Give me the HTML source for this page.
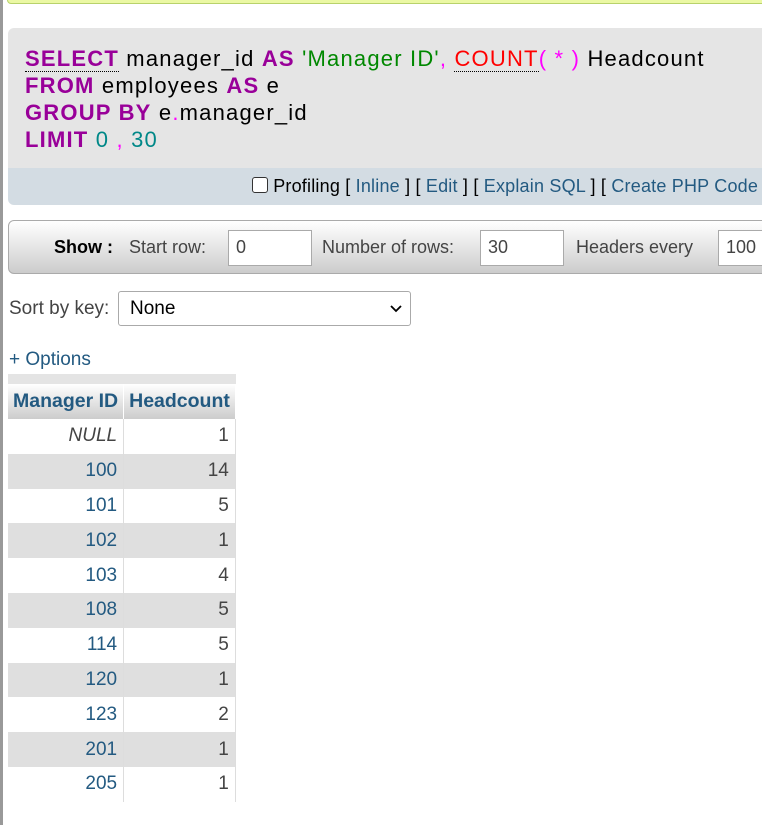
<!DOCTYPE html><html><head><style>
body{margin:0;width:762px;height:825px;overflow:hidden;background:#fff;font-family:"Liberation Sans",sans-serif;position:relative}
.lb{position:absolute;left:0;top:0;width:3px;height:825px;background:#999}
.top{position:absolute;left:7px;top:-8px;width:800px;height:10px;border:1px solid #b8d26b;border-radius:4px;background:#ebf8a4}
.sql{position:absolute;left:8px;top:28px;width:800px;height:140px;background:#e5e5e5;border-radius:6px 0 0 0}
.code{position:absolute;left:17px;top:17px;font-size:22px;letter-spacing:1.2px;line-height:27px;color:#000;white-space:nowrap}
.k{color:#909;font-weight:bold}.s{color:#080}.f{color:#f00}.p{color:#f0f}.n{color:#088}
.u{border-bottom:1px dotted #000}
.bar{position:absolute;left:8px;top:168px;width:800px;height:37px;background:#d3dce3;border-radius:0 0 0 6px;font-size:18px;color:#000;letter-spacing:0.2px}
.bar a{color:#235a81}
.show{position:absolute;left:8px;top:220px;width:800px;height:54px;border-radius:6px 0 0 6px;background:linear-gradient(#fff,#ccc);border:1px solid #aaa;box-sizing:border-box;font-size:18px;color:#444}
.in{position:absolute;top:9px;height:36px;width:84px;border:1px solid #aaa;background:#fff;box-sizing:border-box;padding:6px 7px;color:#444;font-size:18px}
.t{position:absolute;top:16px}
table{position:absolute;left:8px;top:374px;border-collapse:collapse;font-size:19px}
th{background:linear-gradient(#fff,#ccc);color:#235a81;height:35px;padding:0 5px;border-right:1px solid #fff;font-size:19.5px}
td{text-align:right;height:34.8px;padding:0 6px;border-right:1px solid #ddd;color:#235a81;box-sizing:border-box}
td:last-child{color:#444}
tr.g td{background:#dfdfdf}
</style></head><body>
<div class="lb"></div><div class="top"></div>
<div class="sql"><div class="code"><span class="k u">SELECT</span> manager_id <span class="k">AS</span> <span class="s">'Manager ID'</span><span class="p">,</span> <span class="f u">COUNT</span><span class="p">( * )</span> Headcount<br><span class="k">FROM</span> employees <span class="k">AS</span> e<br><span class="k">GROUP BY</span> e<span class="p">.</span>manager_id<br><span class="k">LIMIT</span> <span class="n">0</span> <span class="p">,</span> <span class="n">30</span></div></div>
<div class="bar"><div style="position:absolute;left:244px;top:8px;white-space:nowrap"><span style="display:inline-block;width:14px;height:14px;border:1px solid #333;border-radius:3px;background:#fff;vertical-align:-1px"></span> Profiling [ <a>Inline</a> ] [ <a>Edit</a> ] [ <a>Explain SQL</a> ] [ <a>Create PHP Code</a> ]</div></div>
<div class="show"><span class="t" style="left:45px;color:#000;font-weight:bold">Show :</span><span class="t" style="left:120px">Start row:</span><div class="in" style="left:219px">0</div><span class="t" style="left:313px">Number of rows:</span><div class="in" style="left:471px">30</div><span class="t" style="left:567px">Headers every</span><div class="in" style="left:709px">100</div></div>
<div style="position:absolute;left:9px;top:298px;font-size:19px;color:#444">Sort by key:</div>
<div style="position:absolute;left:118px;top:291px;width:293px;height:35px;border:1px solid #aaa;border-radius:3px;box-sizing:border-box;font-size:19px;padding:6px 11px;color:#000">None<svg style="position:absolute;right:8px;top:13px" width="12" height="8"><path d="M1 1l5 5 5-5" stroke="#000" stroke-width="1.8" fill="none"/></svg></div>
<div style="position:absolute;left:9px;top:349px;font-size:19px;color:#235a81">+ Options</div>
<table><tr><th style="border-top:10px solid #e4e4e4">Manager ID</th><th style="border-top:10px solid #e4e4e4">Headcount</th></tr>
<tr><td style="font-style:italic;color:#444">NULL</td><td>1</td></tr>
<tr class="g"><td>100</td><td>14</td></tr><tr><td>101</td><td>5</td></tr><tr class="g"><td>102</td><td>1</td></tr><tr><td>103</td><td>4</td></tr><tr class="g"><td>108</td><td>5</td></tr><tr><td>114</td><td>5</td></tr><tr class="g"><td>120</td><td>1</td></tr><tr><td>123</td><td>2</td></tr><tr class="g"><td>201</td><td>1</td></tr><tr><td>205</td><td>1</td></tr></table>
</body></html>
